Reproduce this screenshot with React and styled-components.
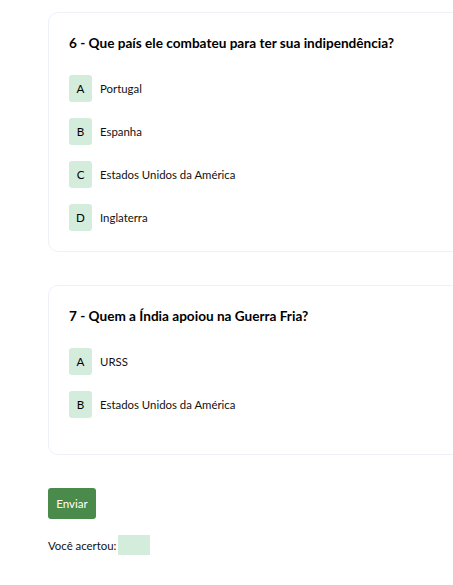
import React from "react";
import styled, { createGlobalStyle } from "styled-components";

const Global = createGlobalStyle`
  html, body { margin: 0; padding: 0; background: #fff; overflow: hidden; }
  body { font-family: Lato, "Open Sans", sans-serif; color: #111; }
`;

const Page = styled.div`
  padding: 12px 0 0 48px;
  display: flex;
  flex-direction: column;
  align-items: flex-start;
`;

const Card = styled.section`
  box-sizing: border-box;
  width: 620px;
  border: 1px solid #eef2f8;
  border-radius: 10px;
  padding: 20px 20px ${(p) => p.$bottom}px 20px;
  margin-bottom: 33px;
`;

const Title = styled.h3`
  margin: 0 0 22px 0;
  font-size: 13.6px;
  line-height: 20px;
  font-weight: 700;
  color: #000;
`;

const Options = styled.div`
  display: flex;
  flex-direction: column;
  gap: 16px;
`;

const Option = styled.div`
  display: flex;
  align-items: center;
  gap: 8px;
  font-size: 11.4px;
  color: #111;
`;

const Badge = styled.span`
  display: flex;
  align-items: center;
  justify-content: center;
  width: 23px;
  height: 27px;
  border-radius: 3px;
  background: #d4ecdc;
  font-size: 11.6px;
  font-weight: 400;
  color: #000;
`;

const Button = styled.button`
  height: 31px;
  width: 48px;
  border: none;
  border-radius: 3px;
  background: #4a8a4b;
  color: #fff;
  font-family: inherit;
  font-size: 11.6px;
  padding: 0;
  margin-bottom: 16px;
`;

const Result = styled.div`
  display: flex;
  align-items: center;
  font-size: 11.4px;
  color: #111;
`;

const Score = styled.span`
  display: inline-block;
  width: 32px;
  height: 20px;
  margin-left: 2px;
  background: #d4ecdc;
`;

const questions = [
  {
    n: 6,
    q: "Que país ele combateu para ter sua indipendência?",
    opts: ["Portugal", "Espanha", "Estados Unidos da América", "Inglaterra"],
    bottom: 20,
  },
  {
    n: 7,
    q: "Quem a Índia apoiou na Guerra Fria?",
    opts: ["URSS", "Estados Unidos da América"],
    bottom: 36,
  },
];

const letters = ["A", "B", "C", "D"];

export default function App() {
  return (
    <>
      <Global />
      <Page>
        {questions.map((item) => (
          <Card key={item.n} $bottom={item.bottom}>
            <Title>
              {item.n} - {item.q}
            </Title>
            <Options>
              {item.opts.map((o, i) => (
                <Option key={o}>
                  <Badge>{letters[i]}</Badge>
                  {o}
                </Option>
              ))}
            </Options>
          </Card>
        ))}
        <Button>Enviar</Button>
        <Result>
          Você acertou:<Score />
        </Result>
      </Page>
    </>
  );
}
